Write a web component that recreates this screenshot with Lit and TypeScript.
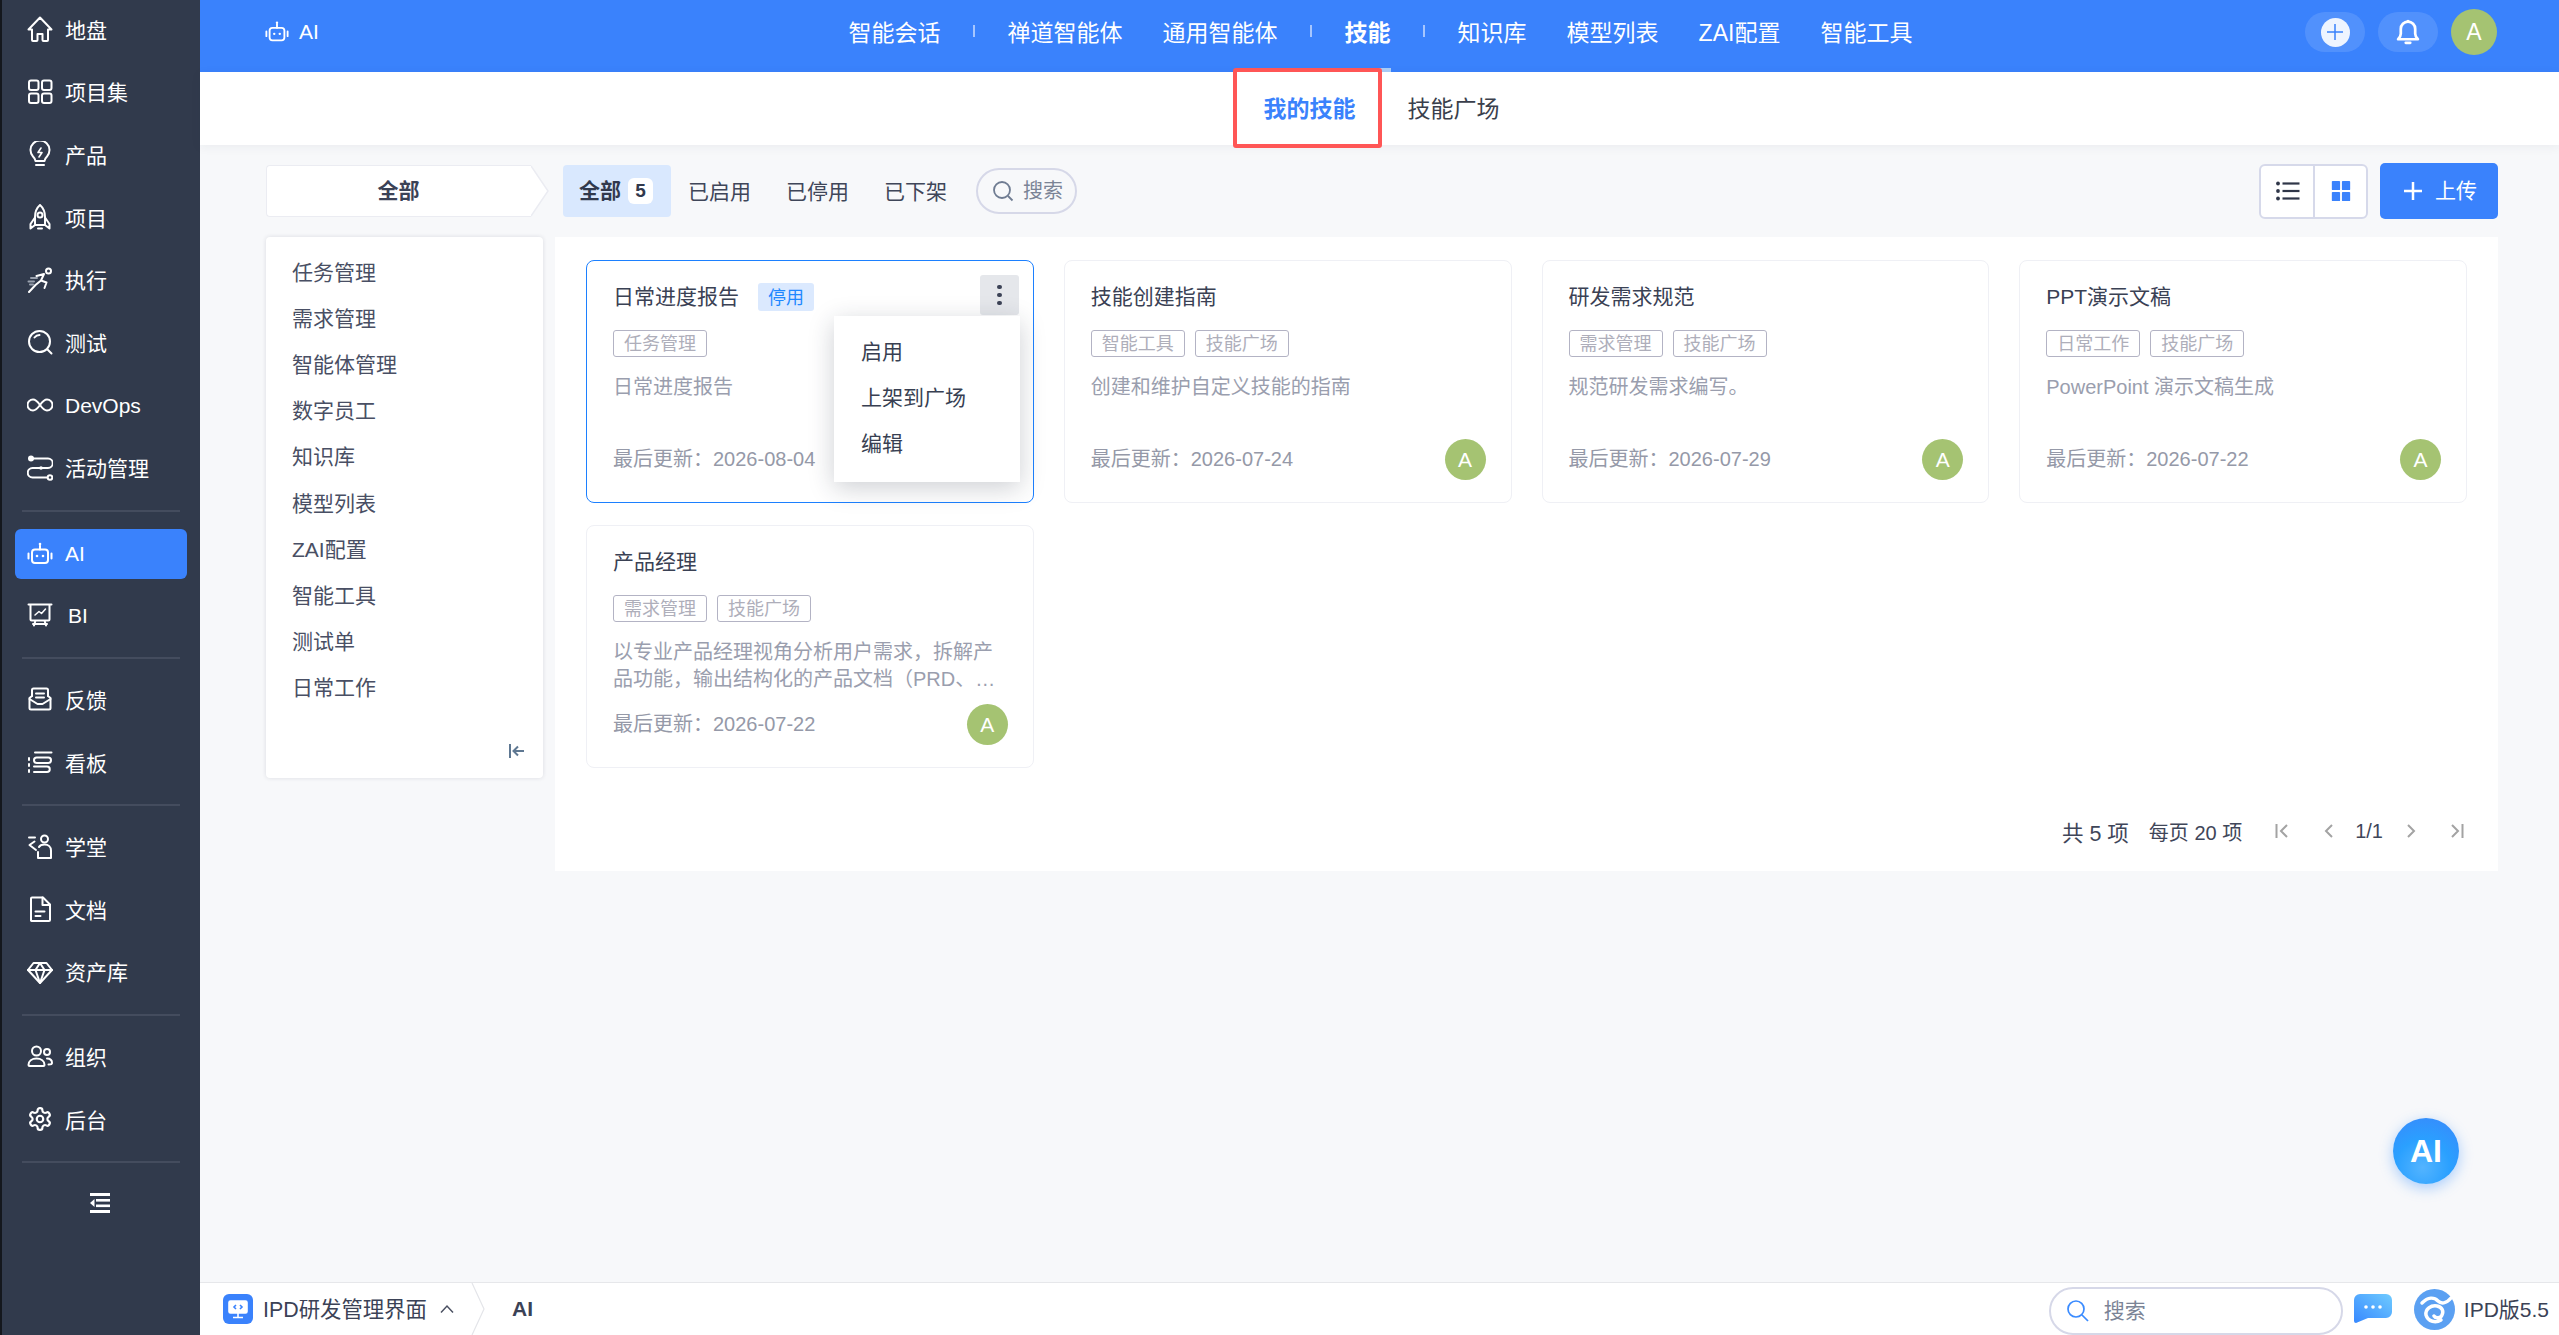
import { LitElement, html, css, svg } from "lit";
import { customElement } from "lit/decorators.js";

const ic = (body: unknown, box = 26) => html`<svg class="ico" viewBox="0 0 ${box} ${box}" fill="none" stroke="currentColor" stroke-width="2" stroke-linecap="round" stroke-linejoin="round">${body}</svg>`;

const icons: Record<string, unknown> = {
  home: svg`<path d="M1.500 13.500 13 1.500l11.500 12H21v10.500a1 1 0 0 1-1 1h-3.500a1 1 0 0 1-1-1V18h-5v6a1 1 0 0 1-1 1H6a1 1 0 0 1-1-1V13.500z"/>`,
  grid: svg`<rect x="2" y="1.500" width="9.500" height="9.500" rx="2"/><rect x="15" y="1.500" width="9.500" height="9.500" rx="2"/><rect x="2" y="14.500" width="9.500" height="9.500" rx="2"/><rect x="15" y="14.500" width="9.500" height="9.500" rx="2"/>`,
  bulb: svg`<path d="M8.500 20c0-2-1-3-2.500-4.500A9.500 9.500 0 1 1 20 15.500C18.500 17 17.500 18 17.500 20z"/><path d="M14 7l-3 4.500h4L12 16" stroke-width="1.600"/><path d="M9 24h8"/>`,
  rocket: svg`<path d="M13 1c-4 3.500-5 8-5 12v8h10v-8c0-4-1-8.500-5-12z"/><circle cx="13" cy="11" r="2.500"/><path d="M8 13.500 3.500 20v4.500L8 21M18 13.500l4.500 6.500v4.500L18 21M11 24.500h4"/>`,
  run: svg`<circle cx="21.500" cy="4" r="2.500"/><path d="M9.500 9l7.500-2-3 6.500 5.500 2-2 5.500M14 13.500l-5.500 4.500L2 25"/><path d="M4 11h6M1.500 14.500H7M3 17.500h3" stroke="#9aa1ae"/>`,
  test: svg`<circle cx="12.500" cy="12.500" r="10.500"/><path d="M20.500 20.500l4 4M12.500 6a6.500 6.500 0 0 0-5 2.500"/>`,
  inf: svg`<path d="M13 13C10 8.800 8 7.500 6 7.500a5.500 5.500 0 0 0 0 11c2 0 4-1.300 7-5.500s5-5.500 7-5.500a5.500 5.500 0 0 1 0 11c-2 0-4-1.300-7-5.500z"/>`,
  flow: svg`<circle cx="4" cy="3.500" r="3" fill="currentColor" stroke="none"/><path d="M6 3.500h15a4.700 4.700 0 0 1 0 9.500H5.500a4.700 4.700 0 0 0 0 9.500H20"/><circle cx="14" cy="13" r="1.800" fill="currentColor" stroke="none"/><circle cx="23" cy="22.500" r="2.300"/>`,
  robot: svg`<rect x="5" y="8.500" width="16" height="13.500" rx="3"/><path d="M13 8.500V4.500"/><circle cx="13" cy="3" r="1.300" fill="currentColor" stroke="none"/><circle cx="10" cy="15" r="1.300" fill="currentColor" stroke="none"/><circle cx="16" cy="15" r="1.300" fill="currentColor" stroke="none"/><path d="M1.500 12.500v5M24.500 12.500v5"/>`,
  bi: svg`<path d="M1.500 2.500h23M3.500 2.500v15a1 1 0 0 0 1 1h17a1 1 0 0 0 1-1v-15M8.500 18.500l-1.500 5M17.500 18.500l1.500 5M6 22h14"/><path d="M8 13l4-3.500 2.500 2L18.500 7" stroke-width="1.500"/>`,
  mail: svg`<path d="M5 10V4a1.500 1.500 0 0 1 1.500-1.500h13A1.500 1.500 0 0 1 21 4v6"/><path d="M5 10l-2.500 2v10a1.500 1.500 0 0 0 1.500 1.500h18a1.500 1.500 0 0 0 1.500-1.500V12L21 10"/><path d="M2.500 13l8 5h5l8-5M9 7.500h8M9 11.500h8"/>`,
  board: svg`<path d="M8 3.500h16.500M2 9v2M2 15v2M2 21v2"/><rect x="7" y="8.500" width="17" height="5.500" rx="2.700"/><path d="M7 17.500h13a2.700 2.700 0 0 1 0 5.500H7"/>`,
  school: svg`<circle cx="17.500" cy="5" r="3.500"/><path d="M2 3.500h6M2.500 11l5-3.500M2.500 11l6.500 5M12 13c1-2 3-2.500 5.500-2.500 4 0 6.500 2.500 6.500 6V24H11v-6"/>`,
  doc: svg`<path d="M4 24.500V2.500a1 1 0 0 1 1-1h11l7 7V24a1 1 0 0 1-1 1H5a1 1 0 0 1-1-.500z"/><path d="M15.500 1.500V9H23M8.500 15.500h9M8.500 20h5"/>`,
  gem: svg`<path d="M6.500 4h13L25 11 13 24 1 11z"/><path d="M1 11h24M8.500 11 13 24l4.500-13M8.500 11 13 4l4.500 7"/>`,
  team: svg`<circle cx="9.500" cy="8" r="4.500"/><circle cx="20" cy="9" r="3"/><path d="M1.500 22c0-4 3.500-6.500 8-6.500s8 2.500 8 6.500a1 1 0 0 1-1 1h-14a1 1 0 0 1-1-1zM20 15.500c3 0 5 1.800 5 4.500 0 1.200-1 1.500-3.500 1.500"/>`,
  gear: svg`<g transform="scale(1.083)"><path d="M12.220 2h-.44a2 2 0 0 0-2 2v.18a2 2 0 0 1-1 1.730l-.43.25a2 2 0 0 1-2 0l-.15-.08a2 2 0 0 0-2.730.73l-.22.38a2 2 0 0 0 .73 2.730l.15.1a2 2 0 0 1 1 1.720v.51a2 2 0 0 1-1 1.740l-.15.09a2 2 0 0 0-.73 2.730l.22.38a2 2 0 0 0 2.730.73l.15-.08a2 2 0 0 1 2 0l.43.25a2 2 0 0 1 1 1.730V20a2 2 0 0 0 2 2h.44a2 2 0 0 0 2-2v-.18a2 2 0 0 1 1-1.730l.43-.25a2 2 0 0 1 2 0l.15.08a2 2 0 0 0 2.730-.73l.22-.39a2 2 0 0 0-.73-2.730l-.15-.08a2 2 0 0 1-1-1.740v-.5a2 2 0 0 1 1-1.740l.15-.09a2 2 0 0 0 .73-2.730l-.22-.38a2 2 0 0 0-2.730-.73l-.15.08a2 2 0 0 1-2 0l-.43-.25a2 2 0 0 1-1-1.730V4a2 2 0 0 0-2-2z"/><circle cx="12" cy="12" r="3"/></g>`,
};

interface Item { k: string; t: string; cls?: string }
const side: (Item | null)[] = [
  { k: "home", t: "地盘" }, { k: "grid", t: "项目集" }, { k: "bulb", t: "产品" }, { k: "rocket", t: "项目" },
  { k: "run", t: "执行" }, { k: "test", t: "测试" }, { k: "inf", t: "DevOps", cls: "lat" }, { k: "flow", t: "活动管理" }, null,
  { k: "robot", t: "AI", cls: "on" }, { k: "bi", t: "BI", cls: "bi lat" }, null,
  { k: "mail", t: "反馈" }, { k: "board", t: "看板" }, null,
  { k: "school", t: "学堂" }, { k: "doc", t: "文档" }, { k: "gem", t: "资产库" }, null,
  { k: "team", t: "组织" }, { k: "gear", t: "后台" }, null,
];

const cats = ["任务管理", "需求管理", "智能体管理", "数字员工", "知识库", "模型列表", "ZAI配置", "智能工具", "测试单", "日常工作"];

interface Card { title: string; badge?: string; tags: string[]; desc: string; date: string; menu?: boolean }
const cards: Card[] = [
  { title: "日常进度报告", badge: "停用", tags: ["任务管理"], desc: "日常进度报告", date: "2026-08-04", menu: true },
  { title: "技能创建指南", tags: ["智能工具", "技能广场"], desc: "创建和维护自定义技能的指南", date: "2026-07-24" },
  { title: "研发需求规范", tags: ["需求管理", "技能广场"], desc: "规范研发需求编写。", date: "2026-07-29" },
  { title: "PPT演示文稿", tags: ["日常工作", "技能广场"], desc: "PowerPoint 演示文稿生成", date: "2026-07-22" },
  { title: "产品经理", tags: ["需求管理", "技能广场"], desc: "以专业产品经理视角分析用户需求，拆解产品功能，输出结构化的产品文档（PRD、…", date: "2026-07-22" },
];

@customElement("app-root")
export class AppRoot extends LitElement {
  static styles = css`
    :host { display: flex; width: 100%; height: 100vh; min-height: 1335px; overflow: hidden; font-family: "Liberation Sans", "Noto Sans CJK SC", sans-serif; font-size: 21px; color: #3b4256; background: #f7f8fa; }
    * { box-sizing: border-box; }
    .ico { width: 26px; height: 26px; display: block; flex: none; }
    .side { width: 200px; flex: none; background: #313a4c; border-left: 2px solid #14171d; color: #fff; display: flex; flex-direction: column; gap: 4.7px; }
    .si { height: 58px; display: flex; align-items: center; }
    .si-in { height: 50px; margin-left: 13px; width: 172px; border-radius: 6px; display: flex; align-items: center; gap: 12px; padding-left: 12px; }
    .si-in span { margin-bottom: 1px; }
    .si.lat .si-in span { margin: 2px 0 0; }
    .si.on .si-in { background: #3a82fc; margin-top: 3px; }
    .si.on .si-in span { margin: 0; }
    .si.bi .si-in span { margin-left: 3px; }
    .sep { height: 2px; margin: 8.3px 20px 6.8px; background: #444c5e; flex: none; }
    .collapse { height: 58px; display: flex; align-items: center; justify-content: center; padding: 0 3px 2px 0; }
    .collapse svg { width: 22px; height: 22px; display: block; }
    .main { flex: 1; min-width: 0; display: flex; flex-direction: column; position: relative; }
    .top { height: 72px; flex: none; background: #3a82fc; color: #fff; display: grid; grid-template-columns: 1fr auto 1fr; align-items: center; padding-bottom: 8px; }
    .top-l { display: flex; align-items: center; gap: 10px; padding-left: 65px; }
    .top-l .ico { width: 24px; height: 24px; }
    .top-l span { margin-bottom: 1px; }
    .nav { display: flex; align-items: center; font-size: 23px; margin: 0 0 3px 2px; }
    .nv { padding: 0 20px; position: relative; }
    .nv.on { font-weight: 700; }
    .nv.on::after { content: ""; position: absolute; left: 20px; right: 20px; top: 54px; height: 4px; background: #a9cdf8; }
    .nsep { width: 27px; display: flex; justify-content: center; }
    .nsep i { width: 1.5px; height: 12px; background: rgba(255,255,255,.55); display: block; }
    .top-r { display: flex; justify-content: flex-end; align-items: center; gap: 13px; padding-right: 62px; }
    .pill { width: 60px; height: 40px; border-radius: 20px; background: rgba(255,255,255,.12); display: flex; align-items: center; justify-content: center; }
    .plus { width: 29px; height: 29px; border-radius: 50%; background: #eef5ff; display: flex; align-items: center; justify-content: center; color: #3a82fc; }
    .pill svg { display: block; }
    .me { width: 46px; height: 46px; border-radius: 50%; background: #a5c372; color: #fff; font-size: 23px; display: flex; align-items: center; justify-content: center; }
    .subnav { height: 73px; flex: none; background: #fff; display: flex; justify-content: center; padding: 0 0 4px 4px; gap: 52px; align-items: center; font-size: 23px; box-shadow: 0 2px 10px rgba(40,50,70,.06); position: relative; z-index: 2; color: #3a3f4c; }
    .sub { position: relative; }
    .sub.on { color: #3a82fc; font-weight: 700; }
    .mark { position: absolute; left: -31px; right: -26px; top: -22px; height: 80px; border: 4px solid #ff5656; border-radius: 3px; }
    .body { flex: 1; min-height: 0; padding: 18px 61px 0 66px; display: flex; flex-direction: column; gap: 18px; }
    .bar { height: 56px; display: flex; align-items: center; flex: none; }
    .crumb { display: flex; height: 52px; width: 283px; flex: none; margin-right: 14px; }
    .crumb b { flex: 1; background: #fff; border: 1.5px solid #ebecf2; border-right: 0; border-radius: 4px 0 0 4px; display: flex; align-items: center; justify-content: center; padding: 0 1px 5px 0; }
    .crumb svg { width: 18px; height: 52px; display: block; flex: none; }
    .tab { height: 52px; padding: 0 17px 3px; display: flex; align-items: center; margin-right: 1px; color: #3f4659; }
    .tab.on { background: #d9e8fe; border-radius: 4px; margin-right: 0; font-weight: 700; gap: 7px; color: #31394d; padding: 0 18px 0 16px; }
    .tab.on span { margin-bottom: 5px; }
    .tab em { width: 25px; height: 26px; background: #fff; border-radius: 6px; font: normal 700 19px "Liberation Sans", sans-serif; display: flex; align-items: center; justify-content: center; color: #31394d; }
    .find { width: 101px; height: 46px; border: 2px solid #d6d8e8; border-radius: 23px; margin-left: 11px; display: flex; align-items: center; gap: 9px; padding-left: 14px; font-size: 20px; color: #7b8496; white-space: nowrap; }
    .find span { margin-bottom: 3px; }
    .find svg { width: 22px; height: 22px; display: block; flex: none; }
    .bar-r { margin-left: auto; display: flex; align-items: center; gap: 12px; }
    .views { width: 109px; height: 55px; border: 2px solid #d6d9ea; border-radius: 6px; background: #fff; display: flex; }
    .views div { flex: 1; display: flex; align-items: center; justify-content: center; }
    .views div + div { border-left: 2px solid #d6d9ea; padding-left: 2px; }
    .views svg { width: 24px; height: 24px; display: block; }
    .views div:first-child { padding-left: 2px; }
    .views div + div svg { width: 22px; height: 22px; }
    .up { width: 118px; height: 56px; background: #3a82fc; border-radius: 5px; color: #fff; display: flex; align-items: center; justify-content: center; gap: 12px; padding-left: 2px; }
    .up span { margin-bottom: 4px; }
    .up svg { width: 20px; height: 20px; display: block; }
    .cols { display: flex; gap: 12px; align-items: flex-start; }
    .cat { width: 277px; height: 541px; flex: none; background: #fff; border-radius: 4px; box-shadow: 0 0 4px rgba(40,50,80,.14); padding: 11px 0 0 26px; display: flex; flex-direction: column; position: relative; color: #494f64; }
    .cat div { height: 46.1px; display: flex; align-items: center; }
    .cat svg { position: absolute; right: 16px; bottom: 17px; width: 20px; height: 20px; }
    .panel { flex: 1; min-width: 0; height: 634px; background: #fff; padding: 23px 31px; display: flex; flex-direction: column; }
    .grid { display: grid; grid-template-columns: repeat(4, 1fr); grid-auto-rows: 243px; gap: 22px 30px; }
    .card { border: 1px solid #eff0f5; border-radius: 8px; padding: 21px 25px 22px 26px; display: flex; flex-direction: column; position: relative; background: #fff; }
    .card.act { border-color: #1c80ff; }
    .ttl { height: 30px; display: flex; align-items: center; gap: 19px; color: #3a4154; }
    .ttl span:first-child { margin-bottom: 5px; }
    .badge { height: 28px; width: 56px; background: #dbe9fe; color: #1e88ff; font-size: 18px; border-radius: 3px; display: flex; align-items: center; justify-content: center; padding-bottom: 2px; }
    .tags { display: flex; gap: 10px; margin-top: 18px; height: 27px; }
    .tag { height: 27px; padding: 0 10px 4px; border: 1px solid #b3b3c4; border-radius: 3px; color: #aeaeba; font-size: 18px; display: flex; align-items: center; }
    .desc { margin-top: 17px; font-size: 20px; line-height: 26.5px; color: #9a9eae; }
    .foot { margin-top: auto; height: 41px; display: flex; align-items: center; justify-content: space-between; font-size: 20px; color: #9599a8; padding-bottom: 4px; }
    .av { width: 41px; height: 41px; flex: none; border-radius: 50%; background: #a5c372; color: #fff; font-size: 21px; display: flex; align-items: center; justify-content: center; margin-bottom: -4px; }
    .more { position: absolute; left: 393px; top: 14px; width: 39px; height: 40px; border-radius: 3px; background: #e5e7eb; display: flex; flex-direction: column; align-items: center; justify-content: center; gap: 3.500px; }
    .more i { width: 4.500px; height: 4.500px; background: #3b4256; border-radius: 50%; display: block; }
    .menu { position: absolute; left: 247px; top: 55px; width: 186px; height: 166px; background: #fff; box-shadow: 0 6px 24px rgba(30,40,60,.22); padding: 11px 0 0 27px; color: #383f52; z-index: 3; }
    .menu div { height: 46px; display: flex; align-items: center; }
    .pager { margin-top: 49px; display: flex; align-items: center; height: 30px; padding: 0 3px 2px 0; justify-content: flex-end; font-size: 20px; color: #3f4659; }
    .pager .t { font-size: 21.500px; margin-right: 20px; }
    .pager svg { width: 14px; height: 16px; display: block; color: #a3a3a3; }
    .pager .a { margin-left: 33px; }
    .pager .b { margin-left: 33px; }
    .pager .n { margin: 0 21px 0 19px; }
    .pager .c { margin-left: 32px; }
    .fab { position: absolute; left: 2193px; top: 1118px; width: 66px; height: 66px; border-radius: 50%; color: #fff; background: radial-gradient(circle at 45% 75%, #53b4ff 0, #2aa0ff 45%, #3a86fb 100%); box-shadow: 0 4px 14px rgba(50,140,255,.4); font-size: 32px; font-weight: 700; display: flex; align-items: center; justify-content: center; }
    .foot-bar { height: 53px; flex: none; background: #fff; border-top: 1px solid #e6e7ea; display: flex; align-items: center; padding: 0 10px 0 23px; }
    .app { width: 30px; height: 30px; border-radius: 6px; background: #3a82fc; display: flex; align-items: center; justify-content: center; margin-right: 10px; }
    .app svg { width: 22px; height: 22px; display: block; }
    .app-name { font-size: 21.400px; margin-bottom: 3px; }
    .chev { width: 14px; height: 10px; display: block; margin: 0 17px 0 13px; }
    .slash { width: 14px; height: 52px; display: block; margin-right: 27px; }
    .foot-bar b { color: #3b4256; }
    .fr { margin-left: auto; display: flex; align-items: center; height: 100%; }
    .fr > span { margin-bottom: 3px; }
    .fsearch { width: 294px; height: 48px; align-self: flex-end; border: 2px solid #d6d8e8; border-radius: 24px; padding-left: 15px; display: flex; align-items: center; gap: 14px; color: #7b8496; }
    .fsearch span { margin-bottom: 5px; }
    .fsearch svg { width: 24px; height: 24px; display: block; }
    .chat { width: 38px; height: 30px; display: block; margin: 0 22px 0 11px; }
    .logo { width: 41px; height: 41px; display: block; margin-right: 9px; }
  `;

  private card(c: Card) {
    return html`<div class="card ${c.menu ? "act" : ""}">
      <div class="ttl"><span>${c.title}</span>${c.badge ? html`<span class="badge">${c.badge}</span>` : ""}</div>
      <div class="tags">${c.tags.map((t) => html`<span class="tag">${t}</span>`)}</div>
      <div class="desc">${c.desc}</div>
      <div class="foot"><span>最后更新：${c.date}</span><span class="av">A</span></div>
      ${c.menu ? html`<div class="more"><i></i><i></i><i></i></div>
        <div class="menu"><div>启用</div><div>上架到广场</div><div>编辑</div></div>` : ""}
    </div>`;
  }

  render() {
    const top = ["智能会话", "|", "禅道智能体", "通用智能体", "|", "技能*", "|", "知识库", "模型列表", "ZAI配置", "智能工具"];
    return html`
      <aside class="side">
        ${side.map((s) => s ? html`<div class="si ${s.cls ?? ""}"><div class="si-in">${ic(icons[s.k])}<span>${s.t}</span></div></div>` : html`<div class="sep"></div>`)}
        <div class="collapse"><svg viewBox="0 0 22 22" fill="#fff"><rect x="1" y="1" width="20" height="3"/><rect x="7" y="7" width="14" height="2.600"/><rect x="7" y="12.500" width="14" height="2.600"/><rect x="1" y="18" width="20" height="3"/><path d="M5.500 7v8L1 11z"/></svg></div>
      </aside>
      <div class="main">
        <header class="top">
          <div class="top-l">${ic(icons.robot)}<span>AI</span></div>
          <nav class="nav">${top.map((t) => t === "|" ? html`<span class="nsep"><i></i></span>` : t.endsWith("*") ? html`<span class="nv on">${t.slice(0, -1)}</span>` : html`<span class="nv">${t}</span>`)}</nav>
          <div class="top-r">
            <div class="pill"><div class="plus"><svg width="20" height="20" viewBox="0 0 20 20" stroke="currentColor" stroke-width="1.500"><path d="M10 2v16M2 10h16"/></svg></div></div>
            <div class="pill"><svg width="24" height="27" viewBox="0 0 26 30" fill="none" stroke="#fff" stroke-width="3"><path d="M2 22.500h22c-2-2-3-3-3-6V11a8 8 0 0 0-16 0v5.500c0 3-1 4-3 6z" stroke-linejoin="round"/><circle cx="13" cy="2.500" r="1.800" fill="#fff" stroke="none"/><path d="M10.500 26.500h5" stroke-linecap="round"/></svg></div>
            <div class="me">A</div>
          </div>
        </header>
        <div class="subnav">
          <span class="sub on">我的技能<span class="mark"></span></span>
          <span class="sub">技能广场</span>
        </div>
        <div class="body">
          <div class="bar">
            <div class="crumb"><b>全部</b><svg viewBox="0 0 18 52" fill="#fff" stroke="#ebecf2" stroke-width="1.500"><path d="M0 1 L17 26 L0 51"/></svg></div>
            <div class="tab on"><span>全部</span><em>5</em></div>
            <div class="tab">已启用</div><div class="tab">已停用</div><div class="tab">已下架</div>
            <div class="find"><svg viewBox="0 0 22 22" fill="none" stroke="#6f7c92" stroke-width="1.800"><circle cx="10" cy="10" r="8"/><path d="M16 16l4.500 4.500"/></svg><span>搜索</span></div>
            <div class="bar-r">
              <div class="views">
                <div><svg viewBox="0 0 24 24" fill="#2f3648"><circle cx="2" cy="4.500" r="1.900"/><circle cx="2" cy="12" r="1.900"/><circle cx="2" cy="19.500" r="1.900"/><rect x="6.500" y="3.400" width="17" height="2.200"/><rect x="6.500" y="10.900" width="17" height="2.200"/><rect x="6.500" y="18.400" width="17" height="2.200"/></svg></div>
                <div><svg viewBox="0 0 24 24" fill="#3a82fc"><rect x="2" y="1" width="9" height="10" rx="1"/><rect x="13" y="1" width="9" height="10" rx="1"/><rect x="2" y="13" width="9" height="10" rx="1"/><rect x="13" y="13" width="9" height="10" rx="1"/></svg></div>
              </div>
              <div class="up"><svg viewBox="0 0 20 20" stroke="#fff" stroke-width="2.500"><path d="M10 1v18M1 10h18"/></svg><span>上传</span></div>
            </div>
          </div>
          <div class="cols">
            <div class="cat">
              ${cats.map((c) => html`<div>${c}</div>`)}
              <svg viewBox="0 0 20 20" fill="none" stroke="#5f7892" stroke-width="2"><path d="M3 3v14M17 10H7M11 5.500 6.500 10l4.500 4.500"/></svg>
            </div>
            <div class="panel">
              <div class="grid">${cards.map((c) => this.card(c))}</div>
              <div class="pager">
                <span class="t">共 5 项</span><span>每页 20 项</span>
                <svg class="a" viewBox="0 0 14 16" fill="none" stroke="currentColor" stroke-width="2"><path d="M1.500 1v14M12 2 6 8l6 6"/></svg>
                <svg class="b" viewBox="0 0 14 16" fill="none" stroke="currentColor" stroke-width="2"><path d="M10 2 4 8l6 6"/></svg>
                <span class="n">1/1</span>
                <svg viewBox="0 0 14 16" fill="none" stroke="currentColor" stroke-width="2"><path d="m4 2 6 6-6 6"/></svg>
                <svg class="c" viewBox="0 0 14 16" fill="none" stroke="currentColor" stroke-width="2"><path d="M12.500 1v14M2 2l6 6-6 6"/></svg>
              </div>
            </div>
          </div>
        </div>
        <div class="fab">AI</div>
        <footer class="foot-bar">
          <div class="app"><svg viewBox="0 0 22 22" fill="none" stroke="#fff" stroke-width="1.600"><rect x="2" y="3" width="18" height="12" rx="1.500" fill="#fff"/><path d="M11 15v4M6 19.500h10" /><path d="M9 7 7 9l2 2M13 7l2 2-2 2" stroke="#3a82fc"/></svg></div>
          <span class="app-name">IPD研发管理界面</span>
          <svg class="chev" viewBox="0 0 14 10" fill="none" stroke="#4b5162" stroke-width="1.500"><path d="M1 8.500 7 2l6 6.500"/></svg>
          <svg class="slash" viewBox="0 0 14 52" fill="none" stroke="#e4e5e9" stroke-width="1.200"><path d="M1 0l12 26L1 52"/></svg>
          <b>AI</b>
          <div class="fr">
            <div class="fsearch"><svg viewBox="0 0 24 24" fill="none" stroke="#3a8bff" stroke-width="1.700"><circle cx="10" cy="10" r="8"/><path d="M16 16l6 6"/></svg><span>搜索</span></div>
            <svg class="chat" viewBox="0 0 38 30"><defs><linearGradient id="cg" x1="0" y1="1" x2="1" y2="0"><stop offset="0" stop-color="#3788ff"/><stop offset="1" stop-color="#6fcbff"/></linearGradient></defs><path d="M6 0h26a6 6 0 0 1 6 6v12a6 6 0 0 1-6 6H14L2 29a2 2 0 0 1-2-2V6a6 6 0 0 1 6-6z" fill="url(#cg)"/><circle cx="12" cy="13" r="1.800" fill="#fff"/><circle cx="19" cy="13" r="1.800" fill="#fff"/><circle cx="26" cy="13" r="1.800" fill="#fff"/></svg>
            <svg class="logo" viewBox="0 0 41 41"><circle cx="20.500" cy="20.500" r="20.500" fill="#5ba0f2"/><g fill="none" stroke="#fff" stroke-linecap="round"><path d="M8 14c6-6 12-6 16-2 3 3 8 3 13-3" stroke-width="3.500"/><path d="M27 31c-5 3-13 2-15-5-1-6 5-10 11-9 5 1 7 5 5 9-1 3-6 4-8 1" stroke-width="3.500"/></g></svg>
            <span>IPD版5.5</span>
          </div>
        </footer>
      </div>
    `;
  }
}
